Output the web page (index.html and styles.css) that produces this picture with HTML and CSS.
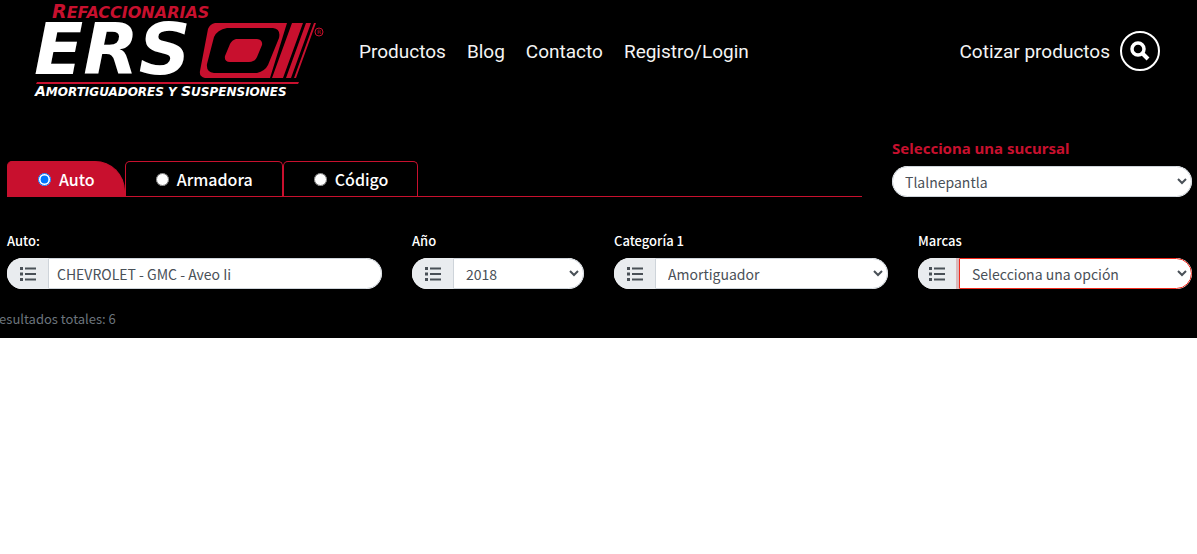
FILE: index.html
```html
<!DOCTYPE html>
<html lang="es">
<head>
<meta charset="utf-8">
<meta name="viewport" content="width=device-width, initial-scale=1">
<title>Refaccionarias ERSO</title>
<link rel="stylesheet" href="styles.css">
</head>
<body>
<svg class="sprite" aria-hidden="true">
  <symbol id="list" viewBox="0 0 16 14"><path d="M0 0h3v3H0zM0 5.500h3v3H0zM0 11h3v3H0zM5 .5h11v2H5zM5 6h11v2H5zM5 11.500h11v2H5z"/></symbol>
  <symbol id="chevron" viewBox="0 0 10 7"><path d="M1 1l4 4 4-4" fill="none" stroke="#495057" stroke-width="2"/></symbol>
</svg>
<div class="page">
  <header class="header">
    <a class="logo" href="#" aria-label="Refaccionarias ERSO">
      <svg width="294" height="104" viewBox="0 0 294 104">
        <text class="logo-top" x="18" y="19"><tspan class="cap">R</tspan>EFACCIONARIAS</text>
        <text class="logo-name" x="0" y="75">ERS</text>
        <path fill="#c8102e" fill-rule="evenodd" d="M181 24H253L236 79H171Q165 78 166 72L174 30Q176 25 181 24ZM193 29Q183 31 180 38L173 65Q172 73 180 74H223Q231 72 234 66L245 39Q247 30 239 29ZM202 40H223Q229 41 228 46L223 58Q221 63 215 63H196Q190 63 191 57L196 45Q198 41 202 40Z"/>
        <path fill="#c8102e" d="M258 24h11l-20 55h-11zM272 24h5l-20 55h-5zM280 24h2l-20 55h-2z"/>
        <circle cx="285" cy="33" r="4" fill="none" stroke="#c8102e"/>
        <text class="logo-mark" x="283" y="35">R</text>
        <path fill="#c8102e" d="M3 83h262l-1 2H2z"/>
        <text class="logo-bottom" x="1" y="97"><tspan class="cap">A</tspan>MORTIGUADORES Y <tspan class="cap">S</tspan>USPENSIONES</text>
      </svg>
    </a>
    <nav class="nav">
      <a href="#">Productos</a>
      <a href="#">Blog</a>
      <a href="#">Contacto</a>
      <a href="#">Registro/Login</a>
    </nav>
    <a class="quote" href="#">Cotizar productos
      <span class="search"><svg width="20" height="20" viewBox="0 0 20 20" fill="none" stroke="#fff"><circle cx="8" cy="8" r="6" stroke-width="3.500"/><path d="M12 12l6 6" stroke-width="4"/></svg></span>
    </a>
  </header>
  <main class="finder">
    <div class="top">
      <div class="tabs">
        <label class="tab active"><input type="radio" name="mode" checked>Auto</label>
        <label class="tab"><input type="radio" name="mode">Armadora</label>
        <label class="tab"><input type="radio" name="mode">Código</label>
      </div>
      <div class="branch">
        <label class="branch-label" for="branch">Selecciona una sucursal</label>
        <div class="control"><select id="branch"><option>Tlalnepantla</option></select><svg class="arrow"><use href="#chevron"/></svg></div>
      </div>
    </div>
    <div class="filters">
      <div class="field">
        <label for="car">Auto:</label>
        <div class="control"><span class="addon"><svg><use href="#list"/></svg></span><input class="text" id="car" type="text" value="CHEVROLET - GMC - Aveo Ii"></div>
      </div>
      <div class="field">
        <label for="year">Año</label>
        <div class="control"><span class="addon"><svg><use href="#list"/></svg></span><select id="year"><option>2018</option></select><svg class="arrow"><use href="#chevron"/></svg></div>
      </div>
      <div class="field">
        <label for="category">Categoría 1</label>
        <div class="control"><span class="addon"><svg><use href="#list"/></svg></span><select id="category"><option>Amortiguador</option></select><svg class="arrow"><use href="#chevron"/></svg></div>
      </div>
      <div class="field">
        <label for="brand">Marcas</label>
        <div class="control"><span class="addon shaded"><svg><use href="#list"/></svg></span><select class="invalid" id="brand"><option>Selecciona una opción</option></select><svg class="arrow"><use href="#chevron"/></svg></div>
      </div>
    </div>
    <p class="results">Resultados totales: 6</p>
  </main>
</div>
</body>
</html>
```
FILE: styles.css
```css
* { box-sizing: border-box; }
body { margin: 0; background: #fff; font-family: "Noto Sans CJK SC", "Noto Sans", sans-serif; font-size: 14px; }
.sprite { display: none; }
.page { background: #000; color: #fff; overflow: hidden; padding-bottom: 9px; }
.header { display: flex; align-items: center; height: 102px; padding: 0 37px 0 34px; font-family: Roboto, sans-serif; font-size: 19px; }
.header a { color: #f4f4f4; text-decoration: none; }
.logo { line-height: 0; }
.logo-top, .logo-name, .logo-bottom { font-family: "DejaVu Sans", sans-serif; font-style: italic; font-weight: bold; }
.logo-top { font-size: 16px; fill: #c8102e; }
.logo-top .cap { font-size: 19px; }
.logo-name { font-size: 72px; fill: #fff; }
.logo-bottom { font-size: 12px; fill: #fff; }
.logo-bottom .cap { font-size: 14px; }
.logo-mark { font-family: "DejaVu Sans", sans-serif; font-size: 6px; fill: #c8102e; }
.nav { display: flex; gap: 21px; margin-left: 31px; }
.quote { display: flex; align-items: center; gap: 10px; margin-left: auto; }
.search { display: flex; align-items: center; justify-content: center; width: 40px; height: 40px; border: 2px solid #fff; border-radius: 50%; }
.finder { padding: 34px 5px 0 7px; }
.top { display: flex; gap: 30px; align-items: flex-end; }
.tabs { display: flex; flex: 1; border-bottom: 1px solid #c8102e; }
.tab { display: flex; align-items: center; gap: 8px; height: 35px; padding: 0 29px 0 30px; border: 1px solid #c8102e; border-bottom: 0; border-radius: 5px 5px 0 0; font-size: 16px; font-weight: 500; }
.tab input { width: 13px; height: 13px; margin: 0; }
.active { background: #c8102e; border-radius: 5px 30px 0 0; }
.branch { width: 300px; }
.branch-label { display: block; margin-bottom: 6px; line-height: 24px; color: #c8102e; font-family: "Noto Sans", sans-serif; font-size: 15px; font-weight: bold; }
.control { display: flex; position: relative; height: 31px; border-radius: 16px; overflow: hidden; background: #fff; }
.control select, .text { flex: 1; min-width: 0; height: 31px; margin: 0; border: 1px solid #ced4da; border-radius: 0 16px 16px 0; background: #fff; color: #495057; font: inherit; line-height: 24px; }
.control select { appearance: none; padding: 1px 24px 0 12px; }
.control .invalid { border-color: #f22a1d; }
.branch .control select { border-radius: 16px; }
.text { padding: 1px 8px 0; }
.arrow { position: absolute; right: 5px; top: 12px; width: 10px; height: 7px; pointer-events: none; }
.addon { display: flex; flex: none; align-items: center; justify-content: center; width: 41px; background: #e9ecef; }
.addon svg { width: 16px; height: 14px; fill: #495057; }
.shaded { border-right: 3px solid #d9b9bc; }
.filters { display: grid; grid-template-columns: 375fr 172fr 274fr 274fr; gap: 30px; margin-top: 34px; }
.field label { display: block; margin-bottom: 7px; line-height: 20px; font-size: 13px; font-weight: 500; }
.results { margin: 19px 0 0 -16px; line-height: 21px; font-size: 13px; color: #6c757d; }
```
